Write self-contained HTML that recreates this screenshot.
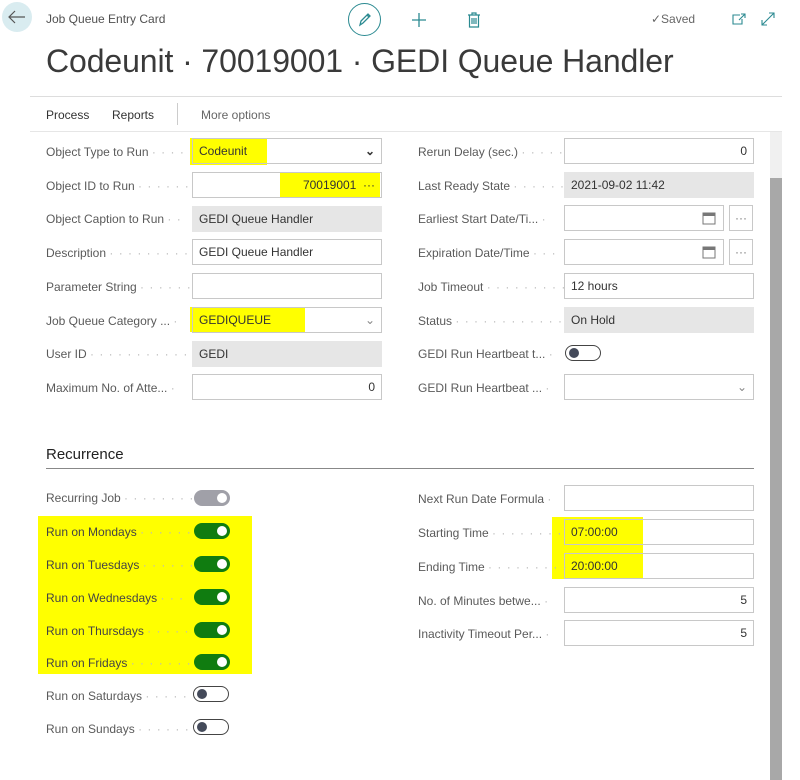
<!DOCTYPE html>
<html><head><meta charset="utf-8"><style>
*{box-sizing:border-box;margin:0;padding:0}
body{width:800px;height:780px;background:#fff;font-family:"Liberation Sans",sans-serif;color:#505050;position:relative;overflow:hidden;font-size:12px}
.a{position:absolute}
.lbl{position:absolute;font-size:12px;color:#5a5a5a;white-space:nowrap;overflow:hidden}
.lbl span.d{color:#bbb;letter-spacing:1px}
.in{position:absolute;height:26px;border:1px solid #c8c8c8;background:#fff;font-size:12px;color:#333;line-height:24px;padding:0 6px;white-space:nowrap}
.ro{background:#e6e6e6;border-color:#e6e6e6}
.r{text-align:right}
.y{position:absolute;background:#ffff00}
.tg{position:absolute;width:36px;height:16px;border-radius:8px}
.on{background:#107c10}
.on::after{content:"";position:absolute;right:3px;top:3px;width:10px;height:10px;border-radius:50%;background:#fff}
.off{border:1px solid #444;background:#fff}
.off::after{content:"";position:absolute;left:3px;top:2px;width:10px;height:10px;border-radius:50%;background:#444a5a}
.gr{background:#a0a0a8}
.gr::after{content:"";position:absolute;right:3px;top:3px;width:10px;height:10px;border-radius:50%;background:#fff}
</style></head><body>
<!-- header -->
<div class="a" style="left:2px;top:2px;width:30px;height:30px;border-radius:50%;background:#d9ecf0"></div>
<svg class="a" style="left:8px;top:10px" width="18" height="14"><path d="M1 7H17M7 1L1 7L7 13" stroke="#555" stroke-width="1.2" fill="none"/></svg>
<div class="a" style="left:46px;top:12px;font-size:12px;color:#505050">Job Queue Entry Card</div>
<div class="a" style="left:348px;top:3px;width:33px;height:33px;border-radius:50%;border:1.5px solid #2b8a91"></div>
<svg class="a" style="left:356px;top:11px" width="18" height="18"><path d="M4 14L5 10L12 3L14 5L7 12Z M11 4L13 6" stroke="#2b8a91" stroke-width="1.3" fill="none"/></svg>
<svg class="a" style="left:410px;top:11px" width="18" height="18"><path d="M9 2V16M2 9H16" stroke="#2b8a91" stroke-width="1.3"/></svg>
<svg class="a" style="left:466px;top:11px" width="16" height="18"><path d="M2 4H14M6 4V2H10V4M3.5 4V16H12.5V4M6 7V13M8 7V13M10 7V13" stroke="#2b8a91" stroke-width="1.2" fill="none"/></svg>
<div class="a" style="left:651px;top:12px;font-size:12px;color:#666">✓Saved</div>
<svg class="a" style="left:731px;top:12px" width="16" height="14"><path d="M9 3H2V12H11V7M8 8L14 2M10 2H14V6" stroke="#2b8a91" stroke-width="1.1" fill="none"/></svg>
<svg class="a" style="left:760px;top:11px" width="16" height="16"><path d="M2 14L14 2M2 9V14H7M9 2H14V7" stroke="#2b8a91" stroke-width="1.1" fill="none"/></svg>
<div class="a" style="left:46px;top:43px;font-size:32px;color:#3a3a3a;font-weight:300;letter-spacing:-0.1px">Codeunit · 70019001 · GEDI Queue Handler</div>
<div class="a" style="left:30px;top:96px;width:752px;height:1px;background:#ddd"></div>
<div class="a" style="left:46px;top:108px;font-size:12px;color:#333">Process</div>
<div class="a" style="left:112px;top:108px;font-size:12px;color:#333">Reports</div>
<div class="a" style="left:177px;top:103px;width:1px;height:22px;background:#ccc"></div>
<div class="a" style="left:201px;top:108px;font-size:12px;color:#666">More options</div>
<div class="a" style="left:30px;top:131px;width:752px;height:1px;background:#e6e6e6"></div>
<!-- scrollbar -->
<div class="a" style="left:770px;top:132px;width:12px;height:648px;background:#f0f0f0"></div>
<div class="a" style="left:770px;top:178px;width:12px;height:602px;background:#a8a8a8"></div>

<!-- highlights -->
<div class="y" style="left:190px;top:138px;width:77px;height:27px"></div>
<div class="y" style="left:280px;top:172px;width:100px;height:26px"></div>
<div class="y" style="left:190px;top:307px;width:115px;height:25px"></div>

<!-- left column -->
<div class="lbl" style="left:46px;top:145px">Object Type to Run <span class="d">· · · ·</span></div>
<div class="in" style="left:192px;top:138px;width:190px;background:transparent">Codeunit<span style="position:absolute;right:6px;font-weight:bold">⌄</span></div>
<div class="lbl" style="left:46px;top:179px">Object ID to Run <span class="d">· · · · · ·</span></div>
<div class="in r" style="left:192px;top:172px;width:190px;background:transparent">70019001 &nbsp;···</div>
<div class="lbl" style="left:46px;top:212px">Object Caption to Run <span class="d">· ·</span></div>
<div class="in ro" style="left:192px;top:206px;width:190px">GEDI Queue Handler</div>
<div class="lbl" style="left:46px;top:246px">Description <span class="d">· · · · · · · · · ·</span></div>
<div class="in" style="left:192px;top:239px;width:190px">GEDI Queue Handler</div>
<div class="lbl" style="left:46px;top:280px">Parameter String <span class="d">· · · · · ·</span></div>
<div class="in" style="left:192px;top:273px;width:190px"></div>
<div class="lbl" style="left:46px;top:314px">Job Queue Category ... <span class="d">·</span></div>
<div class="in" style="left:192px;top:307px;width:190px;background:transparent">GEDIQUEUE<span style="position:absolute;right:6px;color:#888">⌄</span></div>
<div class="lbl" style="left:46px;top:347px">User ID <span class="d">· · · · · · · · · · · ·</span></div>
<div class="in ro" style="left:192px;top:341px;width:190px">GEDI</div>
<div class="lbl" style="left:46px;top:381px">Maximum No. of Atte... <span class="d">·</span></div>
<div class="in r" style="left:192px;top:374px;width:190px">0</div>

<!-- right column -->
<div class="lbl" style="left:418px;top:145px">Rerun Delay (sec.) <span class="d">· · · · ·</span></div>
<div class="in r" style="left:564px;top:138px;width:190px">0</div>
<div class="lbl" style="left:418px;top:179px">Last Ready State <span class="d">· · · · · ·</span></div>
<div class="in ro" style="left:564px;top:172px;width:190px">2021-09-02 11:42</div>
<div class="lbl" style="left:418px;top:212px">Earliest Start Date/Ti... <span class="d">·</span></div>
<div class="in" style="left:564px;top:205px;width:160px"></div>
<div class="in" style="left:729px;top:205px;width:24px;text-align:center;padding:0;color:#777">···</div>
<div class="lbl" style="left:418px;top:246px">Expiration Date/Time <span class="d">· · ·</span></div>
<div class="in" style="left:564px;top:239px;width:160px"></div>
<div class="in" style="left:729px;top:239px;width:24px;text-align:center;padding:0;color:#777">···</div>
<svg class="a" style="left:702px;top:211px" width="14" height="14"><rect x="1" y="2" width="12" height="11" fill="none" stroke="#777"/><rect x="1" y="2" width="12" height="3" fill="#777"/></svg>
<svg class="a" style="left:702px;top:245px" width="14" height="14"><rect x="1" y="2" width="12" height="11" fill="none" stroke="#777"/><rect x="1" y="2" width="12" height="3" fill="#777"/></svg>
<div class="lbl" style="left:418px;top:280px">Job Timeout <span class="d">· · · · · · · · ·</span></div>
<div class="in" style="left:564px;top:273px;width:190px">12 hours</div>
<div class="lbl" style="left:418px;top:314px">Status <span class="d">· · · · · · · · · · · · · ·</span></div>
<div class="in ro" style="left:564px;top:307px;width:190px">On Hold</div>
<div class="lbl" style="left:418px;top:347px">GEDI Run Heartbeat t... <span class="d">·</span></div>
<div class="tg off" style="left:565px;top:345px"></div>
<div class="lbl" style="left:418px;top:381px">GEDI Run Heartbeat ... <span class="d">·</span></div>
<div class="in" style="left:564px;top:374px;width:190px"><span style="position:absolute;right:6px;color:#888">⌄</span></div>

<!-- recurrence -->
<div class="a" style="left:46px;top:446px;font-size:15px;color:#222">Recurrence</div>
<div class="a" style="left:46px;top:468px;width:708px;height:1px;background:#888"></div>
<div class="y" style="left:38px;top:516px;width:214px;height:158px"></div>
<div class="y" style="left:552px;top:517px;width:91px;height:62px"></div>

<div class="lbl" style="left:46px;top:491px">Recurring Job <span class="d">· · · · · · · ·</span></div>
<div class="tg gr" style="left:194px;top:490px"></div>
<div class="lbl" style="left:46px;top:525px;color:#444">Run on Mondays <span class="d">· · · · · ·</span></div>
<div class="tg on" style="left:194px;top:523px"></div>
<div class="lbl" style="left:46px;top:558px;color:#444">Run on Tuesdays <span class="d">· · · · · ·</span></div>
<div class="tg on" style="left:194px;top:556px"></div>
<div class="lbl" style="left:46px;top:591px;color:#444">Run on Wednesdays <span class="d">· · ·</span></div>
<div class="tg on" style="left:194px;top:589px"></div>
<div class="lbl" style="left:46px;top:624px;color:#444">Run on Thursdays <span class="d">· · · · ·</span></div>
<div class="tg on" style="left:194px;top:622px"></div>
<div class="lbl" style="left:46px;top:656px;color:#444">Run on Fridays <span class="d">· · · · · · ·</span></div>
<div class="tg on" style="left:194px;top:654px"></div>
<div class="lbl" style="left:46px;top:689px">Run on Saturdays <span class="d">· · · · · ·</span></div>
<div class="tg off" style="left:193px;top:686px"></div>
<div class="lbl" style="left:46px;top:722px">Run on Sundays <span class="d">· · · · · · ·</span></div>
<div class="tg off" style="left:193px;top:719px"></div>

<div class="lbl" style="left:418px;top:492px">Next Run Date Formula <span class="d">·</span></div>
<div class="in" style="left:564px;top:485px;width:190px"></div>
<div class="lbl" style="left:418px;top:526px">Starting Time <span class="d">· · · · · · · ·</span></div>
<div class="in" style="left:564px;top:519px;width:190px;background:linear-gradient(90deg,transparent 79px,#fff 79px)">07:00:00</div>
<div class="lbl" style="left:418px;top:560px">Ending Time <span class="d">· · · · · · · · ·</span></div>
<div class="in" style="left:564px;top:553px;width:190px;background:linear-gradient(90deg,transparent 79px,#fff 79px)">20:00:00</div>
<div class="lbl" style="left:418px;top:594px">No. of Minutes betwe... <span class="d">·</span></div>
<div class="in r" style="left:564px;top:587px;width:190px">5</div>
<div class="lbl" style="left:418px;top:627px">Inactivity Timeout Per... <span class="d">·</span></div>
<div class="in r" style="left:564px;top:620px;width:190px">5</div>
</body></html>
